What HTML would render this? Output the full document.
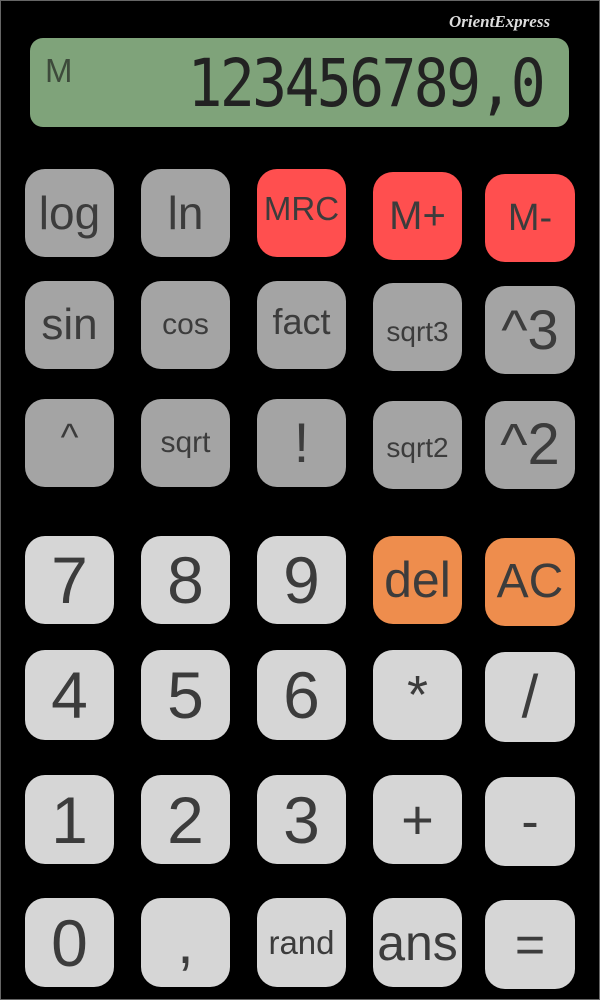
<!DOCTYPE html>
<html><head><meta charset="utf-8"><style>
html,body{margin:0;padding:0;background:#000;}
body{width:600px;height:1000px;position:relative;overflow:hidden;font-family:"Liberation Sans",sans-serif;}
.frame{position:absolute;left:0;top:0;width:598px;height:998px;border:1px solid #666;}
.b{position:absolute;width:89px;height:88px;border-radius:20px;display:flex;align-items:center;justify-content:center;color:#3c3c3c;line-height:1;}
.g{background:#a4a4a4}.r{background:#ff4f4f}.o{background:#ee8d4d}.l{background:#d6d6d6}
.disp{position:absolute;left:30px;top:38px;width:539px;height:89px;border-radius:13px;background:#7fa37a;}
.M{position:absolute;left:45px;top:52px;font-size:33px;color:#3d4a3b;}
.num{position:absolute;right:57px;top:48px;font-family:"DejaVu Sans Mono","Liberation Mono",monospace;font-size:66px;color:#222;letter-spacing:-3px;transform:scaleX(0.88);transform-origin:right center;line-height:1.1;}
.logo{position:absolute;left:449px;top:12px;font-family:"Liberation Serif",serif;font-style:italic;font-weight:bold;font-size:17px;color:#ddd;}
</style></head><body>
<div class="frame"></div>
<div class="logo">OrientExpress</div>
<div class="disp"></div>
<div class="M">M</div>
<div class="num">123456789,0</div>

<div class="b g" style="left:25px;top:169px;font-size:46px">log</div>
<div class="b g" style="left:141px;top:169px;font-size:46px">ln</div>
<div class="b r" style="left:257px;top:169px;font-size:33px;padding-bottom:10px;box-sizing:border-box">MRC</div>
<div class="b r" style="left:373px;top:172px;font-size:40px">M+</div>
<div class="b r" style="left:485px;top:174px;width:90px;font-size:38px">M-</div>

<div class="b g" style="left:25px;top:281px;font-size:44px">sin</div>
<div class="b g" style="left:141px;top:281px;font-size:30px">cos</div>
<div class="b g" style="left:257px;top:281px;font-size:36px;padding-bottom:6px;box-sizing:border-box">fact</div>
<div class="b g" style="left:373px;top:283px;font-size:28px;padding-top:10px;box-sizing:border-box">sqrt3</div>
<div class="b g" style="left:485px;top:286px;width:90px;font-size:56px">^3</div>

<div class="b g" style="left:25px;top:399px;font-size:38px;padding-bottom:10px;box-sizing:border-box">^</div>
<div class="b g" style="left:141px;top:399px;font-size:30px">sqrt</div>
<div class="b g" style="left:257px;top:399px;font-size:56px">!</div>
<div class="b g" style="left:373px;top:401px;font-size:28px;padding-top:6px;box-sizing:border-box">sqrt2</div>
<div class="b g" style="left:485px;top:401px;width:90px;font-size:58px">^2</div>

<div class="b l" style="left:25px;top:536px;font-size:66px">7</div>
<div class="b l" style="left:141px;top:536px;font-size:66px">8</div>
<div class="b l" style="left:257px;top:536px;font-size:66px">9</div>
<div class="b o" style="left:373px;top:536px;font-size:50px">del</div>
<div class="b o" style="left:485px;top:538px;width:90px;font-size:48px">AC</div>

<div class="b l" style="left:25px;top:650px;height:90px;font-size:66px">4</div>
<div class="b l" style="left:141px;top:650px;height:90px;font-size:66px">5</div>
<div class="b l" style="left:257px;top:650px;height:90px;font-size:66px">6</div>
<div class="b l" style="left:373px;top:650px;height:90px;font-size:54px">*</div>
<div class="b l" style="left:485px;top:652px;width:90px;height:90px;font-size:60px">/</div>

<div class="b l" style="left:25px;top:775px;height:89px;font-size:66px">1</div>
<div class="b l" style="left:141px;top:775px;height:89px;font-size:66px">2</div>
<div class="b l" style="left:257px;top:775px;height:89px;font-size:66px">3</div>
<div class="b l" style="left:373px;top:775px;height:89px;font-size:56px">+</div>
<div class="b l" style="left:485px;top:777px;width:90px;height:89px;font-size:52px">-</div>

<div class="b l" style="left:25px;top:898px;height:89px;font-size:66px">0</div>
<div class="b l" style="left:141px;top:898px;height:89px;font-size:60px">,</div>
<div class="b l" style="left:257px;top:898px;height:89px;font-size:33px">rand</div>
<div class="b l" style="left:373px;top:898px;height:89px;font-size:50px">ans</div>
<div class="b l" style="left:485px;top:900px;width:90px;height:89px;font-size:52px">=</div>
</body></html>
